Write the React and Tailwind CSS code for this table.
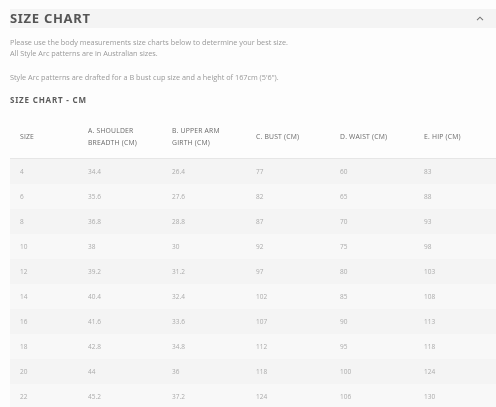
import React from "react";

const rows = [
  ["4", "34.4", "26.4", "77", "60", "83"],
  ["6", "35.6", "27.6", "82", "65", "88"],
  ["8", "36.8", "28.8", "87", "70", "93"],
  ["10", "38", "30", "92", "75", "98"],
  ["12", "39.2", "31.2", "97", "80", "103"],
  ["14", "40.4", "32.4", "102", "85", "108"],
  ["16", "41.6", "33.6", "107", "90", "113"],
  ["18", "42.8", "34.8", "112", "95", "118"],
  ["20", "44", "36", "118", "100", "124"],
  ["22", "45.2", "37.2", "124", "106", "130"],
];

const headers = [
  ["SIZE"],
  ["A. SHOULDER", "BREADTH (CM)"],
  ["B. UPPER ARM", "GIRTH (CM)"],
  ["C. BUST (CM)"],
  ["D. WAIST (CM)"],
  ["E. HIP (CM)"],
];

const widths = ["w-[68px]", "w-[84px]", "w-[84px]", "w-[84px]", "w-[84px]", "w-[84px]"];

export default function App() {
  return (
    <div className="w-[496px] h-[407px] overflow-hidden bg-[#fdfdfd] pl-[10px] pt-[9px] will-change-transform" style={{ fontFamily: '"Open Sans", "Liberation Sans", sans-serif' }}>
      <div className="h-[19px] bg-[#f4f4f4] flex items-center justify-between pr-[12px]">
        <div className="text-[13px] font-bold tracking-[0.7px] text-[#555] leading-none" style={{ fontFamily: '"Noto Sans", "Open Sans", sans-serif' }}>SIZE CHART</div>
        <svg width="8" height="5" viewBox="0 0 8 5" fill="none">
          <path d="M1 4.2 L4 1.2 L7 4.2" stroke="#777" strokeWidth="1.1" />
        </svg>
      </div>
      <div className="mt-[9px] text-[7.3px] leading-[11px] text-[#999]">
        <p>Please use the body measurements size charts below to determine your best size.</p>
        <p>All Style Arc patterns are in Australian sizes.</p>
        <p className="mt-[13px]">Style Arc patterns are drafted for a B bust cup size and a height of 167cm (5'6").</p>
      </div>
      <div className="mt-[13px] text-[8px] font-bold tracking-[0.8px] text-[#5c5c5c] leading-none" style={{ fontFamily: '"Noto Sans", "Open Sans", sans-serif' }}>SIZE CHART - CM</div>
      <div className="mt-[11px] w-[496px]">
        <div className="flex h-[44px] border-b border-[#e6e6e6] items-center">
          {headers.map((h, i) => (
            <div key={i} className={`${widths[i]} pl-[10px] text-[6.8px] leading-[12px] text-[#6a6a6a] tracking-[0.2px]`}>
              {h.map((l, j) => (
                <div key={j}>{l}</div>
              ))}
            </div>
          ))}
        </div>
        {rows.map((r, ri) => (
          <div key={ri} className={`flex h-[25px] items-center ${ri % 2 === 0 ? "bg-[#f4f4f4]" : "bg-[#f8f8f8]"}`}>
            {r.map((c, ci) => (
              <div key={ci} className={`${widths[ci]} pl-[10px] text-[6.5px] text-[#ababab]`}>{c}</div>
            ))}
          </div>
        ))}
      </div>
    </div>
  );
}
